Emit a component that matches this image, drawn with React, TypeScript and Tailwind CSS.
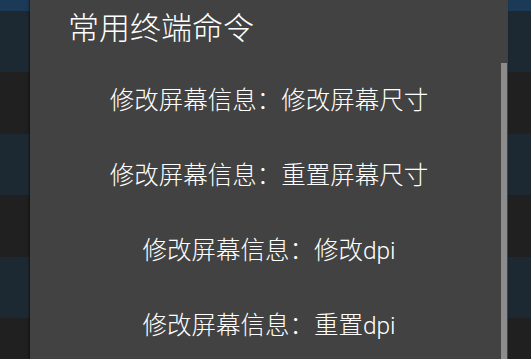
export default function App() {
  const items = [
    "修改屏幕信息：修改屏幕尺寸",
    "修改屏幕信息：重置屏幕尺寸",
    "修改屏幕信息：修改dpi",
    "修改屏幕信息：重置dpi",
  ];
  return (
    <div
      className="relative w-[531px] h-[359px] overflow-hidden bg-[#202020]"
      style={{ fontFamily: 'Roboto, "Noto Sans CJK SC", "Noto Sans", sans-serif' }}
    >
      <div className="flex flex-col">
        <div className="h-[11px] bg-[#1b3a57]" />
        <div className="h-[61px] bg-[#1c2932]" />
        <div className="h-[62px] bg-[#202020]" />
        <div className="h-[61px] bg-[#1c2932]" />
        <div className="h-[62px] bg-[#202020]" />
        <div className="h-[61px] bg-[#1c2932]" />
        <div className="h-[41px] bg-[#202020]" />
      </div>
      <div className="absolute left-[30px] right-[23px] top-0 bottom-0 bg-[#424242] shadow-[-1px_0_2px_rgba(0,0,0,0.5)]">
        <div className="pt-[13px] pl-[38px] text-[31px] leading-[31px] h-[44px] font-light text-white">
          常用终端命令
        </div>
        <div className="mt-[19px] flex flex-col">
          {items.map((t) => (
            <div
              key={t}
              className="h-[75px] flex items-center justify-center text-[24.5px] leading-[25px] font-light text-white"
            >
              {t}
            </div>
          ))}
        </div>
        <div className="absolute right-[1px] top-[63px] bottom-0 w-[6px] bg-[#8c8c8c]" />
      </div>
    </div>
  );
}
